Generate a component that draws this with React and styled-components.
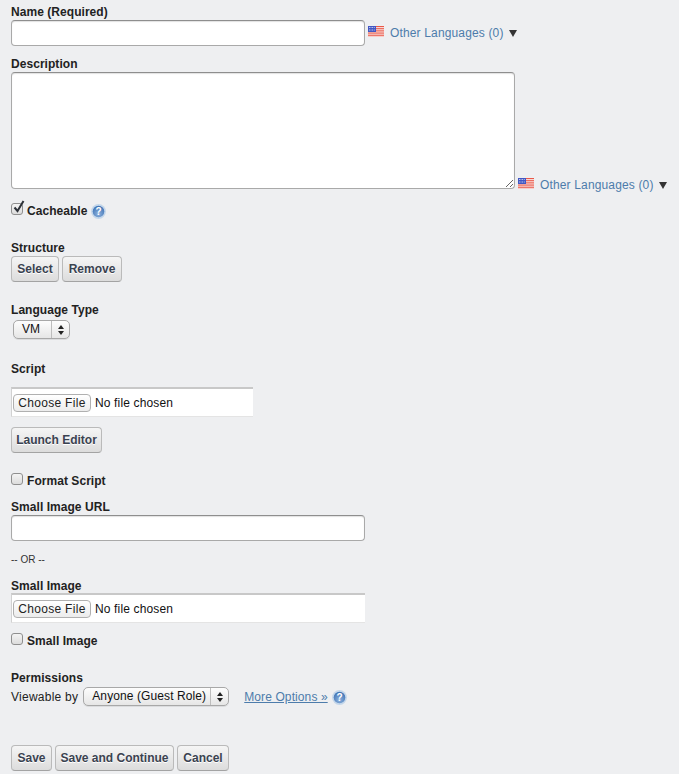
import styled, { createGlobalStyle } from "styled-components";

const GlobalStyle = createGlobalStyle`
  html, body {
    margin: 0;
    padding: 0;
    background: #eeeff1;
  }
  body {
    font-family: "Liberation Sans", Arial, sans-serif;
    font-size: 12px;
    color: #1f1f1f;
  }
`;

const Form = styled.form`
  width: 679px;
  height: 774px;
  padding: 5px 0 0 11px;
  box-sizing: border-box;
  overflow: hidden;
`;
const Section = styled.div`
  margin-top: ${({ $top }) => $top || 0}px;
`;
const Label = styled.label`
  display: block;
  height: 15px;
  line-height: 14px;
  font-weight: bold;
  font-size: 12px;
  letter-spacing: 0.05px;
  color: #222;
`;
const Row = styled.div`
  display: flex;
  align-items: ${({ $align }) => $align || "center"};
`;
const TextInput = styled.input`
  display: block;
  box-sizing: border-box;
  width: ${({ $width }) => $width}px;
  height: 26px;
  margin: 0;
  background: #fff;
  border: 1px solid #a9a9a9;
  border-top-color: #8e8e8e;
  border-radius: 4px;
  box-shadow: inset 0 1px 1px rgba(0, 0, 0, 0.12);
`;
const TextArea = styled.textarea`
  display: block;
  box-sizing: border-box;
  width: 504px;
  height: 117px;
  margin: 0;
  background: #fff;
  border: 1px solid #a9a9a9;
  border-top-color: #8e8e8e;
  border-radius: 4px;
  box-shadow: inset 0 1px 1px rgba(0, 0, 0, 0.12);
`;
const Flag = styled.svg`
  display: block;
  width: 16px;
  height: 11px;
  margin-top: -3px;
  flex: none;
`;
const LanguageLink = styled.a`
  margin-left: 6px;
  color: #4d7cab;
  font-size: 12px;
  letter-spacing: 0.15px;
  white-space: nowrap;
`;
const Caret = styled.span`
  width: 0;
  height: 0;
  margin-left: 5px;
  border-left: 4px solid transparent;
  border-right: 4px solid transparent;
  border-top: 7px solid #333;
`;
const LanguageGroup = styled.div`
  display: flex;
  align-items: center;
  margin-left: 3px;
  height: ${({ $height }) => $height}px;
`;
const CheckRow = styled.label`
  display: flex;
  align-items: center;
  height: 16px;
  font-weight: bold;
  letter-spacing: 0.05px;
  color: #222;
`;
const CheckBox = styled.span`
  display: flex;
  align-items: center;
  justify-content: center;
  box-sizing: border-box;
  width: 12px;
  height: 12px;
  margin: -4px 4px 0 0;
  border: 1px solid #8f8f8f;
  border-radius: 3px;
  background: linear-gradient(#f4f4f4, #dcdcdc);
  position: relative;
`;
const Tick = styled.svg`
  position: absolute;
  left: 0;
  top: -4px;
  width: 13px;
  height: 14px;
`;
const HelpIcon = styled.svg`
  display: block;
  width: 15px;
  height: 15px;
  margin-left: ${({ $left }) => $left || 0}px;
  margin-top: ${({ $top }) => $top || 0}px;
  flex: none;
`;
const ButtonRow = styled.div`
  display: flex;
  gap: 3px;
`;
const Button = styled.button`
  box-sizing: border-box;
  height: 26px;
  padding: 0;
  width: ${({ $width }) => $width}px;
  font-family: inherit;
  font-size: 12px;
  font-weight: bold;
  color: #3a4250;
  border: 1px solid #bababa;
  border-bottom-color: #a3a3a3;
  border-radius: 4px;
  background: linear-gradient(#f5f5f5, #dcdcdc);
  text-shadow: 0 1px 0 #fff;
  white-space: nowrap;
`;
const SelectBox = styled.div`
  display: inline-flex;
  box-sizing: border-box;
  height: 19px;
  width: ${({ $width }) => $width}px;
  margin-left: ${({ $left }) => $left || 0}px;
  border: 1px solid #a8a8a8;
  border-radius: 5px;
  background: linear-gradient(#fdfdfd, #e6e6e6);
  box-shadow: 0 1px 0 rgba(0, 0, 0, 0.08);
  font-size: 12px;
  letter-spacing: 0.1px;
  color: #111;
  overflow: hidden;
`;
const SelectText = styled.span`
  flex: 1;
  line-height: 17px;
  padding-left: ${({ $pad }) => $pad}px;
  white-space: nowrap;
`;
const SelectArrows = styled.span`
  flex: none;
  width: 17px;
  border-left: 1px solid #bdbdbd;
  display: flex;
  flex-direction: column;
  align-items: center;
  justify-content: center;
  gap: 2px;
`;
const ArrowUp = styled.span`
  border-left: 3px solid transparent;
  border-right: 3px solid transparent;
  border-bottom: 4px solid #222;
`;
const ArrowDown = styled.span`
  border-left: 3px solid transparent;
  border-right: 3px solid transparent;
  border-top: 4px solid #222;
`;
const FileBox = styled.div`
  box-sizing: border-box;
  width: ${({ $width }) => $width}px;
  height: 30px;
  margin-top: ${({ $top }) => $top || 0}px;
  display: flex;
  align-items: center;
  padding-left: 1px;
  background: #fff;
  border-top: 2px solid #c8c8c8;
  border-left: 1px solid #d2d2d2;
  border-bottom: 1px solid #e4e4e4;
`;
const FileInput = styled.input`
  font-family: inherit;
  font-size: 12px;
  color: #111;
  width: 100%;
  letter-spacing: 0.15px;
  &::file-selector-button {
    box-sizing: border-box;
    width: 78px;
    height: 18px;
    margin-right: 4px;
    padding: 0;
    font-family: inherit;
    font-size: 12px;
    letter-spacing: 0.3px;
    color: #222;
    border: 1px solid #b0b0b0;
    border-radius: 4px;
    background: linear-gradient(#fff, #ececec);
  }
`;
const OrText = styled.div`
  height: 12px;
  line-height: 12px;
  font-size: 10px;
  color: #333;
`;
const ViewText = styled.span`
  color: #222;
  letter-spacing: 0.25px;
  white-space: nowrap;
`;
const MoreLink = styled.a`
  margin-left: 15px;
  color: #4d7cab;
  text-decoration: underline;
  letter-spacing: 0.1px;
  white-space: nowrap;
`;

function UsFlag() {
  const stripes = [0, 1, 2, 3, 4, 5];
  const stars = [1, 2.6, 4.2, 5.8];
  return (
    <Flag viewBox="0 0 16 11">
      <rect width="16" height="11" fill="#fbeeee" />
      {stripes.map((i) => (
        <rect key={i} y={i * 1.85} width="16" height="0.95" fill="#e8503f" />
      ))}
      <rect width="8" height="6" fill="#4257c4" />
      <g fill="#fff">
        {stars.map((x) => (
          <rect key={x} x={x} y="1" width="0.8" height="0.8" />
        ))}
        {stars.map((x) => (
          <rect key={x} x={x} y="3.6" width="0.8" height="0.8" />
        ))}
      </g>
    </Flag>
  );
}

function Help({ left, top }) {
  return (
    <HelpIcon viewBox="0 0 15 15" $left={left} $top={top}>
      <defs>
        <radialGradient id="helpFill" cx="50%" cy="70%" r="65%">
          <stop offset="0%" stopColor="#8fb2dd" />
          <stop offset="100%" stopColor="#3f74b6" />
        </radialGradient>
      </defs>
      <circle cx="7.5" cy="7.5" r="7.4" fill="#c3d6ea" />
      <circle cx="7.5" cy="7.5" r="5.8" fill="url(#helpFill)" />
      <text
        x="7.5"
        y="11"
        textAnchor="middle"
        fontSize="10"
        fontWeight="bold"
        fontFamily="Liberation Sans, sans-serif"
        fill="#fff"
      >
        ?
      </text>
    </HelpIcon>
  );
}

function Check({ checked, children }) {
  return (
    <CheckRow>
      <CheckBox>
        {checked && (
          <Tick viewBox="0 0 13 14">
            <path d="M2.5 7.5 L5.5 11 L11.5 1" fill="none" stroke="#2c3138" strokeWidth="2" />
          </Tick>
        )}
      </CheckBox>
      {children}
    </CheckRow>
  );
}

function Select({ width, pad, left, children }) {
  return (
    <SelectBox $width={width} $left={left}>
      <SelectText $pad={pad}>{children}</SelectText>
      <SelectArrows>
        <ArrowUp />
        <ArrowDown />
      </SelectArrows>
    </SelectBox>
  );
}

export default function App() {
  return (
    <Form onSubmit={(e) => e.preventDefault()}>
      <GlobalStyle />
      <Label>Name (Required)</Label>
      <Row>
        <TextInput $width={354} />
        <LanguageGroup $height={26}>
          <UsFlag />
          <LanguageLink>Other Languages (0)</LanguageLink>
          <Caret />
        </LanguageGroup>
      </Row>

      <Section $top={11}>
        <Label>Description</Label>
        <Row $align="flex-end">
          <TextArea />
          <LanguageGroup $height={8}>
            <UsFlag />
            <LanguageLink>Other Languages (0)</LanguageLink>
            <Caret />
          </LanguageGroup>
        </Row>
      </Section>

      <Section $top={13}>
        <Row>
          <Check checked>Cacheable</Check>
          <Help left={4} top={2} />
        </Row>
      </Section>

      <Section $top={22}>
        <Label>Structure</Label>
        <ButtonRow>
          <Button $width={48}>Select</Button>
          <Button $width={60}>Remove</Button>
        </ButtonRow>
      </Section>

      <Section $top={21}>
        <Label>Language Type</Label>
        <Section $top={2}>
          <Select width={57} pad={8} left={2}>VM</Select>
        </Section>
      </Section>

      <Section $top={23}>
        <Label>Script</Label>
        <Section $top={10}>
          <FileBox $width={242}>
            <FileInput type="file" />
          </FileBox>
        </Section>
        <Section $top={10}>
          <Button $width={91}>Launch Editor</Button>
        </Section>
      </Section>

      <Section $top={20}>
        <Check>Format Script</Check>
      </Section>

      <Section $top={11}>
        <Label>Small Image URL</Label>
        <TextInput $width={354} />
      </Section>

      <Section $top={13}>
        <OrText>-- OR --</OrText>
      </Section>

      <Section $top={13}>
        <Label>Small Image</Label>
        <FileBox $width={354} $top={-1}>
          <FileInput type="file" />
        </FileBox>
      </Section>

      <Section $top={10}>
        <Check>Small Image</Check>
      </Section>

      <Section $top={22}>
        <Label>Permissions</Label>
        <Section $top={1}>
          <Row>
            <ViewText>Viewable by</ViewText>
            <Select width={146} pad={8} left={5}>Anyone (Guest Role)</Select>
            <MoreLink>More Options »</MoreLink>
            <Help left={4} top={2} />
          </Row>
        </Section>
      </Section>

      <Section $top={39}>
        <ButtonRow>
          <Button $width={41}>Save</Button>
          <Button $width={119}>Save and Continue</Button>
          <Button $width={52}>Cancel</Button>
        </ButtonRow>
      </Section>
    </Form>
  );
}
